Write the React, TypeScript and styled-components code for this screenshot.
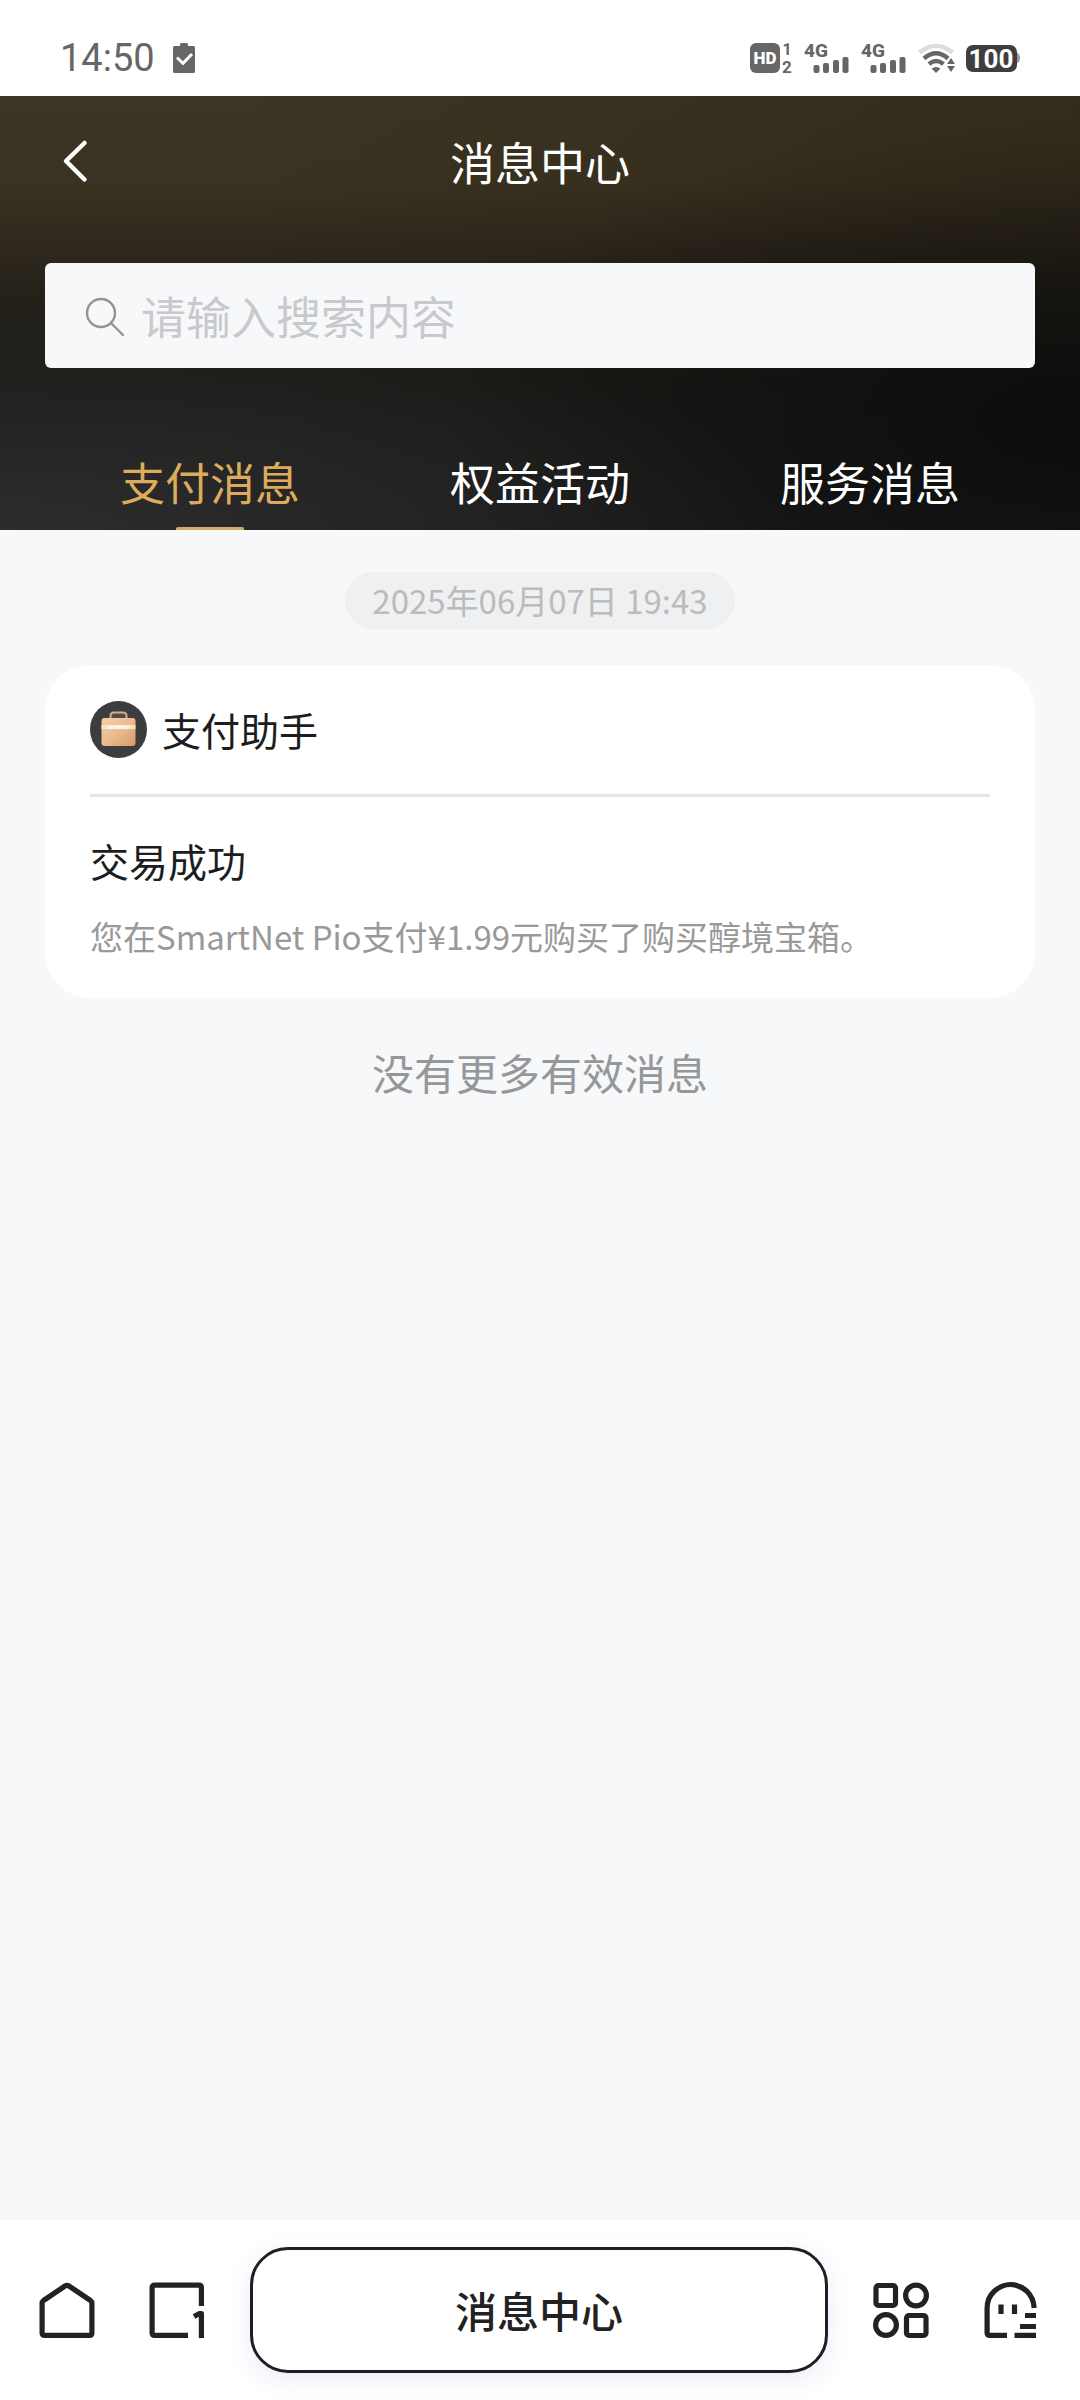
import React, { useState } from "react";
import styled, { createGlobalStyle } from "styled-components";

const GlobalStyle = createGlobalStyle`
  *, *::before, *::after { box-sizing: border-box; }
  body {
    margin: 0;
    background: #f7f8fa;
    font-family: "Noto Sans CJK SC", sans-serif;
    color: #1c1d20;
  }
  button, input { font: inherit; color: inherit; }
  h1, h2, p { margin: 0; font-weight: 400; }
  svg { flex: none; overflow: visible; }
`;

const Page = styled.div`
  display: flex;
  flex-direction: column;
  min-height: 100vh;
`;

const StatusBar = styled.div`
  display: flex;
  align-items: center;
  justify-content: space-between;
  height: 96px;
  padding: 20px 60px 0;
  background: #fff;
  color: #666;
`;

const StatusGroup = styled.div<{ $gap: number }>`
  display: flex;
  align-items: center;
  gap: ${(p) => p.$gap}px;
`;

const Clock = styled.span`
  font: 400 38px/44px Roboto, sans-serif;
`;

const Header = styled.header`
  padding: 0 45px;
  color: #fff;
  background:
    radial-gradient(ellipse 75% 50% at 0% 100%, rgba(60, 60, 62, 0.5), rgba(60, 60, 62, 0) 100%),
    radial-gradient(ellipse 60% 70% at 100% 75%, rgba(5, 5, 5, 0.6), rgba(5, 5, 5, 0) 100%),
    linear-gradient(90deg, rgba(5, 5, 5, 0) 20%, rgba(5, 5, 5, 0.18) 100%),
    linear-gradient(180deg, #3d3523 0%, #3b3321 20%, #31291d 33%, #25221a 44%, #1c1b18 65%, #1d1d1d 100%);
`;

const TitleBar = styled.div`
  display: grid;
  grid-template-columns: 1fr auto 1fr;
  align-items: center;
  height: 132px;
`;

const BackButton = styled.button`
  display: flex;
  align-items: center;
  width: 60px;
  height: 60px;
  padding: 0 18px;
  border: 0;
  background: none;
`;

const Title = styled.h1`
  font-size: 45px;
  line-height: 60px;
`;

const SearchBox = styled.label`
  display: flex;
  align-items: center;
  gap: 16px;
  height: 105px;
  margin-top: 35px;
  padding: 0 40px;
  border-radius: 6px;
  background: #f7f8fa;
`;

const SearchInput = styled.input`
  flex: 1;
  min-width: 0;
  height: 66px;
  padding: 0;
  border: 0;
  outline: 0;
  background: none;
  color: #1c1d20;
  font-size: 45px;
  &::placeholder { color: #c8c9cc; opacity: 1; }
`;

const Tabs = styled.div`
  display: grid;
  grid-template-columns: repeat(3, 1fr);
  margin-top: 66px;
`;

const Tab = styled.button<{ $active: boolean }>`
  position: relative;
  height: 96px;
  padding: 0;
  border: 0;
  background: none;
  font-size: 45px;
  line-height: 60px;
  color: ${(p) => (p.$active ? "#dcac5c" : "#fff")};
  &::after {
    content: "";
    position: absolute;
    left: 50%;
    bottom: 0;
    width: 68px;
    height: 3px;
    margin-left: -34px;
    border-radius: 2px 2px 0 0;
    background: ${(p) => (p.$active ? "#cfac68" : "transparent")};
  }
`;

const Feed = styled.main`
  display: flex;
  flex: 1;
  flex-direction: column;
  align-items: center;
  padding: 42px 45px;
`;

const DatePill = styled.time`
  padding: 0 27px;
  border-radius: 29px;
  background: #eff0f2;
  color: #bbbbbc;
  font-size: 33px;
  line-height: 57px;
`;

const Card = styled.article`
  align-self: stretch;
  margin-top: 36px;
  padding: 36px 45px 38px;
  border-radius: 45px;
  background: #fff;
`;

const Sender = styled.div`
  display: flex;
  align-items: center;
  gap: 15px;
  padding-bottom: 36px;
  border-bottom: 3px solid #e6e6e6;
  font-size: 39px;
  line-height: 57px;
`;

const CardTitle = styled.h2`
  margin-top: 35px;
  font-size: 39px;
  line-height: 56px;
`;

const CardText = styled.p`
  margin-top: 24px;
  color: #999;
  font-size: 33px;
  line-height: 48px;
`;

const EndNote = styled.p`
  margin-top: 44px;
  color: #969799;
  font-size: 42px;
  line-height: 60px;
`;

const BottomBar = styled.nav`
  position: sticky;
  bottom: 0;
  display: flex;
  align-items: center;
  height: 180px;
  padding: 0 14px 0 12px;
  background: #fff;
`;

const NavButton = styled.button`
  display: flex;
  align-items: center;
  justify-content: center;
  width: 110px;
  height: 110px;
  padding: 0;
  border: 0;
  background: none;
`;

const PageButton = styled.button`
  flex: 1;
  height: 126px;
  margin: 0 18px;
  border: 3px solid #1e1f22;
  border-radius: 38px;
  background: #fff;
  box-shadow: 0 6px 24px rgba(90, 90, 220, 0.12);
  color: #222;
  font-size: 42px;
  font-weight: 500;
  line-height: 60px;
`;

const ClipboardIcon = () => (
  <svg width="22" height="30" viewBox="0 0 22 30" aria-hidden="true">
    <path d="M1.500 3H7V1.500Q7 0 8.500 0h5Q15 0 15 1.500V3h5.500Q22 3 22 4.500v24q0 1.500-1.500 1.500h-19Q0 30 0 28.500v-24Q0 3 1.500 3z" fill="#666" />
    <path d="M4 14.500l6 5.800L19 11" fill="none" stroke="#fff" strokeWidth="3" />
  </svg>
);

const HdIcon = () => (
  <svg width="42" height="30" viewBox="0 0 42 30" role="img" aria-label="HD">
    <rect width="30" height="30" rx="6" fill="#666" />
    <text x="15" y="21" textAnchor="middle" fontFamily="Roboto, sans-serif" fontWeight="900" fontSize="17" fill="#fff">HD</text>
    <text x="37" y="12" textAnchor="middle" fontFamily="Roboto, sans-serif" fontWeight="700" fontSize="16" fill="#666">1</text>
    <text x="37" y="30" textAnchor="middle" fontFamily="Roboto, sans-serif" fontWeight="700" fontSize="17" fill="#666">2</text>
  </svg>
);

const SignalIcon = () => (
  <svg width="45" height="30" viewBox="0 0 45 30" role="img" aria-label="4G">
    <text x="0" y="14" fontFamily="Roboto, sans-serif" fontWeight="800" fontSize="19" fill="#666">4G</text>
    <g fill="#666">
      <rect x="9.500" y="22" width="6" height="8" rx="2" />
      <rect x="19" y="20" width="6" height="10" rx="2" />
      <rect x="29" y="17" width="6" height="13" rx="2" />
      <rect x="38.500" y="14" width="6" height="16" rx="2" />
    </g>
  </svg>
);

const WifiIcon = () => (
  <svg width="36" height="30" viewBox="0 0 36 30" role="img" aria-label="Wi-Fi">
    <g fill="none" strokeWidth="4.500">
      <path d="M1.500 9.500Q18 -3.500 34.500 9.500" stroke="#ddd" />
      <path d="M6 15.500Q18 5 30 15.500" stroke="#666" />
      <path d="M11 21Q18 15 25.500 21" stroke="#666" />
    </g>
    <path d="M13.500 25.500Q18 22.500 22.500 25.500L18 30z" fill="#666" />
    <path d="M33 15l4 6h-8zM33 29l-4-6h8z" fill="#666" />
  </svg>
);

const BatteryIcon = () => (
  <svg width="54" height="28" viewBox="0 0 54 28" role="img" aria-label="100">
    <path d="M49 9h2.500Q54 10 54 14t-2.500 5H49z" fill="#999" />
    <rect y="1" width="51" height="27" rx="7" fill="#3e3e3e" />
    <text x="25" y="24" textAnchor="middle" fontFamily="Roboto, sans-serif" fontWeight="700" fontSize="26" fill="#fff">100</text>
  </svg>
);

const BackIcon = () => (
  <svg width="24" height="42" viewBox="0 0 24 42" fill="none" stroke="#fff" strokeWidth="4.500" strokeLinecap="round" strokeLinejoin="round" aria-hidden="true">
    <path d="M21.500 2L3 20 21.500 38.500" />
  </svg>
);

const SearchIcon = () => (
  <svg width="40" height="40" viewBox="0 0 40 40" fill="none" stroke="#949494" strokeWidth="2.400" strokeLinecap="round" aria-hidden="true">
    <circle cx="16" cy="17" r="14" />
    <path d="M26 27l12 12" />
  </svg>
);

const BriefcaseAvatar = () => (
  <svg width="57" height="57" viewBox="0 0 57 57" aria-hidden="true">
    <defs>
      <linearGradient id="leather" x1="0" y1="0" x2="1" y2="1">
        <stop offset="0" stopColor="#f6cfa6" />
        <stop offset="0.500" stopColor="#eabb8f" />
        <stop offset="1" stopColor="#d79a68" />
      </linearGradient>
      <linearGradient id="strap" x1="0" y1="0" x2="1" y2="0">
        <stop offset="0" stopColor="#f9dfc0" />
        <stop offset="0.500" stopColor="#fff6ea" />
        <stop offset="1" stopColor="#f6d9b8" />
      </linearGradient>
    </defs>
    <circle cx="28.500" cy="28.500" r="28.500" fill="#3d3d3f" />
    <path d="M20.500 18V15q0-3.500 3.500-3.500h9q3.500 0 3.500 3.500v3" fill="#554a40" stroke="#cdb094" strokeWidth="2" />
    <rect x="11.500" y="17" width="34" height="28" rx="3" fill="url(#leather)" />
    <rect x="11.500" y="24" width="34" height="4" fill="url(#strap)" />
    <circle cx="20.500" cy="26.500" r="2" fill="#fff3e2" />
    <circle cx="36.500" cy="26.500" r="2" fill="#fff3e2" />
  </svg>
);

const navStroke = { fill: "none", stroke: "#222", strokeWidth: 5.2, strokeLinejoin: "round" } as const;

const HomeIcon = () => (
  <svg width="56" height="58" viewBox="0 0 56 58" aria-hidden="true">
    <path d="M3.100 22Q3.100 20.500 4.500 19.500L26 5Q28 3.700 30 5L51.500 19.500Q52.900 20.500 52.900 22V52q0 2.400-2.400 2.400H5.500q-2.400 0-2.400-2.400z" {...navStroke} />
  </svg>
);

const WindowsIcon = () => (
  <svg width="56" height="58" viewBox="0 0 56 58" aria-hidden="true">
    <path d="M39 54.400H5.500q-2.400 0-2.400-2.400V6.600q0-2.400 2.400-2.400h44.500q2.400 0 2.400 2.400V25" {...navStroke} />
    <path d="M45 35.500l5.500-3h1.900V57" {...navStroke} />
  </svg>
);

const AppsIcon = () => (
  <svg width="56" height="58" viewBox="0 0 56 58" {...navStroke} aria-hidden="true">
    <rect x="3" y="4.500" width="19.500" height="20" rx="2.500" />
    <circle cx="43" cy="14.500" r="10.400" />
    <circle cx="13" cy="44" r="10.400" />
    <rect x="33.500" y="34.500" width="19.500" height="20" rx="2.500" />
  </svg>
);

const GhostIcon = () => (
  <svg width="56" height="58" viewBox="0 0 56 58" {...navStroke} aria-hidden="true">
    <path d="M24 54.400H6.500q-2.400 0-2.400-2.400V27.500Q4.100 16.500 11.500 10 19 3.500 27.500 3.500T44 10.300Q50.500 16.500 51.200 27" />
    <path d="M18 23.500v9.500M31.500 23.500v9.500M42 34.500h11M37 45.500h16M31.500 54.400h21.500" />
  </svg>
);

const TAB_LABELS = ["支付消息", "权益活动", "服务消息"];

export default function App() {
  const [active, setActive] = useState(0);
  const [query, setQuery] = useState("");

  return (
    <>
      <GlobalStyle />
      <Page>
        <StatusBar>
          <StatusGroup $gap={18}>
            <Clock>14:50</Clock>
            <ClipboardIcon />
          </StatusGroup>
          <StatusGroup $gap={12}>
            <HdIcon />
            <SignalIcon />
            <SignalIcon />
            <WifiIcon />
            <BatteryIcon />
          </StatusGroup>
        </StatusBar>

        <Header>
          <TitleBar>
            <BackButton type="button" aria-label="返回">
              <BackIcon />
            </BackButton>
            <Title>消息中心</Title>
          </TitleBar>
          <SearchBox>
            <SearchIcon />
            <SearchInput
              type="text"
              aria-label="搜索"
              placeholder="请输入搜索内容"
              value={query}
              onChange={(e) => setQuery(e.target.value)}
            />
          </SearchBox>
          <Tabs role="tablist">
            {TAB_LABELS.map((label, i) => (
              <Tab
                key={label}
                type="button"
                role="tab"
                aria-selected={i === active}
                $active={i === active}
                onClick={() => setActive(i)}
              >
                {label}
              </Tab>
            ))}
          </Tabs>
        </Header>

        <Feed>
          <DatePill dateTime="2025-06-07T19:43">2025年06月07日 19:43</DatePill>
          <Card>
            <Sender>
              <BriefcaseAvatar />
              <span>支付助手</span>
            </Sender>
            <CardTitle>交易成功</CardTitle>
            <CardText>您在SmartNet Pio支付¥1.99元购买了购买醇境宝箱。</CardText>
          </Card>
          <EndNote>没有更多有效消息</EndNote>
        </Feed>

        <BottomBar>
          <NavButton type="button" aria-label="主页">
            <HomeIcon />
          </NavButton>
          <NavButton type="button" aria-label="窗口">
            <WindowsIcon />
          </NavButton>
          <PageButton type="button">消息中心</PageButton>
          <NavButton type="button" aria-label="应用">
            <AppsIcon />
          </NavButton>
          <NavButton type="button" aria-label="我的">
            <GhostIcon />
          </NavButton>
        </BottomBar>
      </Page>
    </>
  );
}
